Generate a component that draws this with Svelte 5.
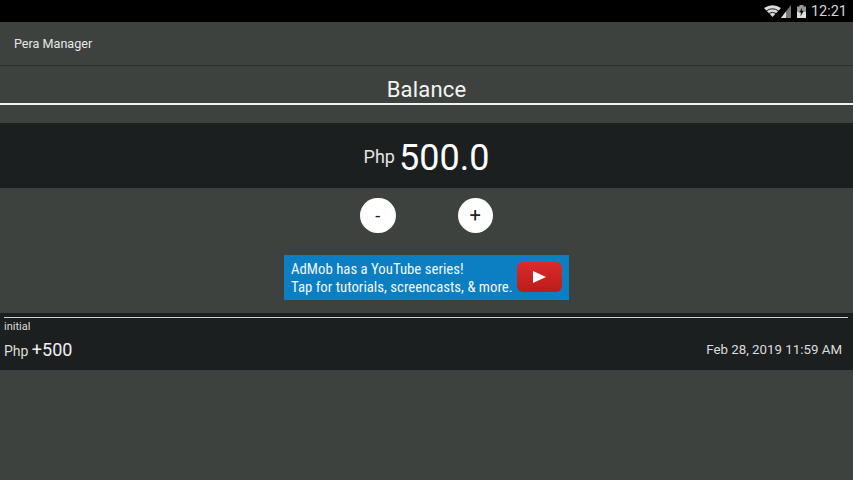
<script lang="ts">
	const entries = [{ note: 'initial', amount: '+500', date: 'Feb 28, 2019 11:59 AM' }];
</script>

<div class="screen">
	<div class="status">
		<svg class="wifi" width="17" height="12" viewBox="0 0 17 12">
			<path d="M0 3 Q8.5 -2.6 17 3 L8.5 12 Z" fill="#dcdcdc" />
			<path d="M2.4 5.9 Q8.5 1.7 14.6 5.9 M5 8.5 Q8.5 6.1 12 8.5" fill="none" stroke="#000" stroke-width="0.9" />
		</svg>
		<svg class="signal" width="10" height="13" viewBox="0 0 10 13">
			<path d="M10 0 V13 H0 Z" fill="#777" />
			<path d="M5 6.5 V13 H0 Z" fill="#e0e0e0" />
		</svg>
		<svg class="battery" width="9" height="13" viewBox="0 0 9 13">
			<path d="M2.5 0 H6.5 V1.5 H9 V13 H0 V1.5 H2.5 Z" fill="#9a9a9a" />
			<path d="M0 7 H9 V13 H0 Z" fill="#dedede" />
			<path d="M5.2 2.6 L2.2 7.6 H4 L3.5 11.4 L6.8 5.8 H4.8 Z" fill="#111" />
		</svg>
		<span class="clock">12:21</span>
	</div>

	<header class="appbar">Pera Manager</header>

	<h1 class="title">Balance</h1>

	<section class="balance">
		<span class="currency">Php</span>
		<span class="total">500.0</span>
	</section>

	<div class="actions">
		<button type="button" class="round minus">-</button>
		<button type="button" class="round">+</button>
	</div>

	<div class="ad">
		<div class="ad-copy">
			<div>AdMob has a YouTube series!</div>
			<div>Tap for tutorials, screencasts, &amp; more.</div>
		</div>
		<div class="yt"><span class="yt-play"></span></div>
	</div>

	<ul class="list">
		{#each entries as entry}
			<li class="row">
				<div class="rule"></div>
				<div class="note">{entry.note}</div>
				<div class="line">
					<span class="amount"><span class="php">Php</span> {entry.amount}</span>
					<span class="date">{entry.date}</span>
				</div>
			</li>
		{/each}
	</ul>
</div>

<style>
	:global(body) {
		margin: 0;
		background: #3e423f;
	}

	.screen {
		width: 853px;
		height: 480px;
		overflow: hidden;
		background: #3e423f;
		color: #fff;
		font-family: Roboto, "Liberation Sans", sans-serif;
	}

	.status {
		height: 22px;
		background: #000;
		display: flex;
		align-items: center;
		justify-content: flex-end;
		padding-right: 6px;
		box-sizing: border-box;
	}

	.signal {
		margin-right: 6px;
	}

	.battery {
		margin-right: 5px;
	}

	.clock {
		font-size: 14.5px;
		color: #d4d4d4;
	}

	.appbar {
		height: 44px;
		box-sizing: border-box;
		border-bottom: 1px solid #2b2e2c;
		padding-left: 14px;
		display: flex;
		align-items: center;
		font-size: 12.6px;
		color: #e6e6e6;
	}

	.title {
		margin: 0;
		height: 39px;
		box-sizing: border-box;
		border-bottom: 2px solid #f2f2f2;
		text-align: center;
		font-size: 22px;
		font-weight: 400;
		line-height: 47px;
		color: #f4f4f4;
		letter-spacing: 0.2px;
	}

	.balance {
		margin-top: 18px;
		height: 65px;
		box-sizing: border-box;
		padding-top: 4px;
		background: #1c1f20;
		display: flex;
		align-items: center;
		justify-content: center;
		gap: 4px;
	}

	.currency {
		font-size: 18px;
		color: #e4e4e4;
		margin-bottom: 3px;
	}

	.total {
		font-size: 36px;
	}

	.actions {
		margin-top: 9.5px;
		display: flex;
		justify-content: center;
		gap: 62px;
	}

	.round {
		width: 35.5px;
		height: 35.5px;
		padding: 0;
		border: 0;
		border-radius: 50%;
		background: #fff;
		color: #222;
		font-family: inherit;
		font-size: 20px;
		line-height: 35.5px;
	}

	.minus {
		font-size: 18px;
	}

	.ad {
		margin: 22px auto 0 284px;
		width: 285px;
		height: 45px;
		box-sizing: border-box;
		background: #0b7fc2;
		display: flex;
		align-items: center;
		justify-content: space-between;
		padding: 0 7.5px 0 7px;
	}

	.ad-copy {
		font-size: 14.8px;
		font-stretch: condensed;
		line-height: 18px;
		color: #f2f6fa;
		white-space: nowrap;
	}

	.yt {
		width: 44.5px;
		height: 30px;
		margin-bottom: 1px;
		border-radius: 6px;
		background: linear-gradient(#dc2a2a, #bb1c1c);
		display: flex;
		align-items: center;
		justify-content: center;
	}

	.yt-play {
		width: 0;
		height: 0;
		border-left: 13px solid #fff;
		border-top: 6px solid transparent;
		border-bottom: 6px solid transparent;
	}

	.list {
		list-style: none;
		margin: 13px 0 0;
		padding: 0;
	}

	.row {
		height: 57px;
		box-sizing: border-box;
		background: #1c1f20;
		padding: 4px 5px 0 4px;
	}

	.rule {
		height: 1px;
		background: #d0d0d0;
	}

	.note {
		font-size: 11px;
		line-height: 13px;
		margin-top: 2px;
		color: #dcdcdc;
	}

	.line {
		display: flex;
		justify-content: space-between;
		align-items: center;
		margin-top: 6px;
		padding-right: 6px;
	}

	.amount {
		font-size: 18px;
		word-spacing: -1px;
		color: #f0f0f0;
	}

	.php {
		font-size: 14px;
		color: #dcdcdc;
	}

	.date {
		font-size: 13.3px;
		color: #dcdcdc;
	}
</style>
